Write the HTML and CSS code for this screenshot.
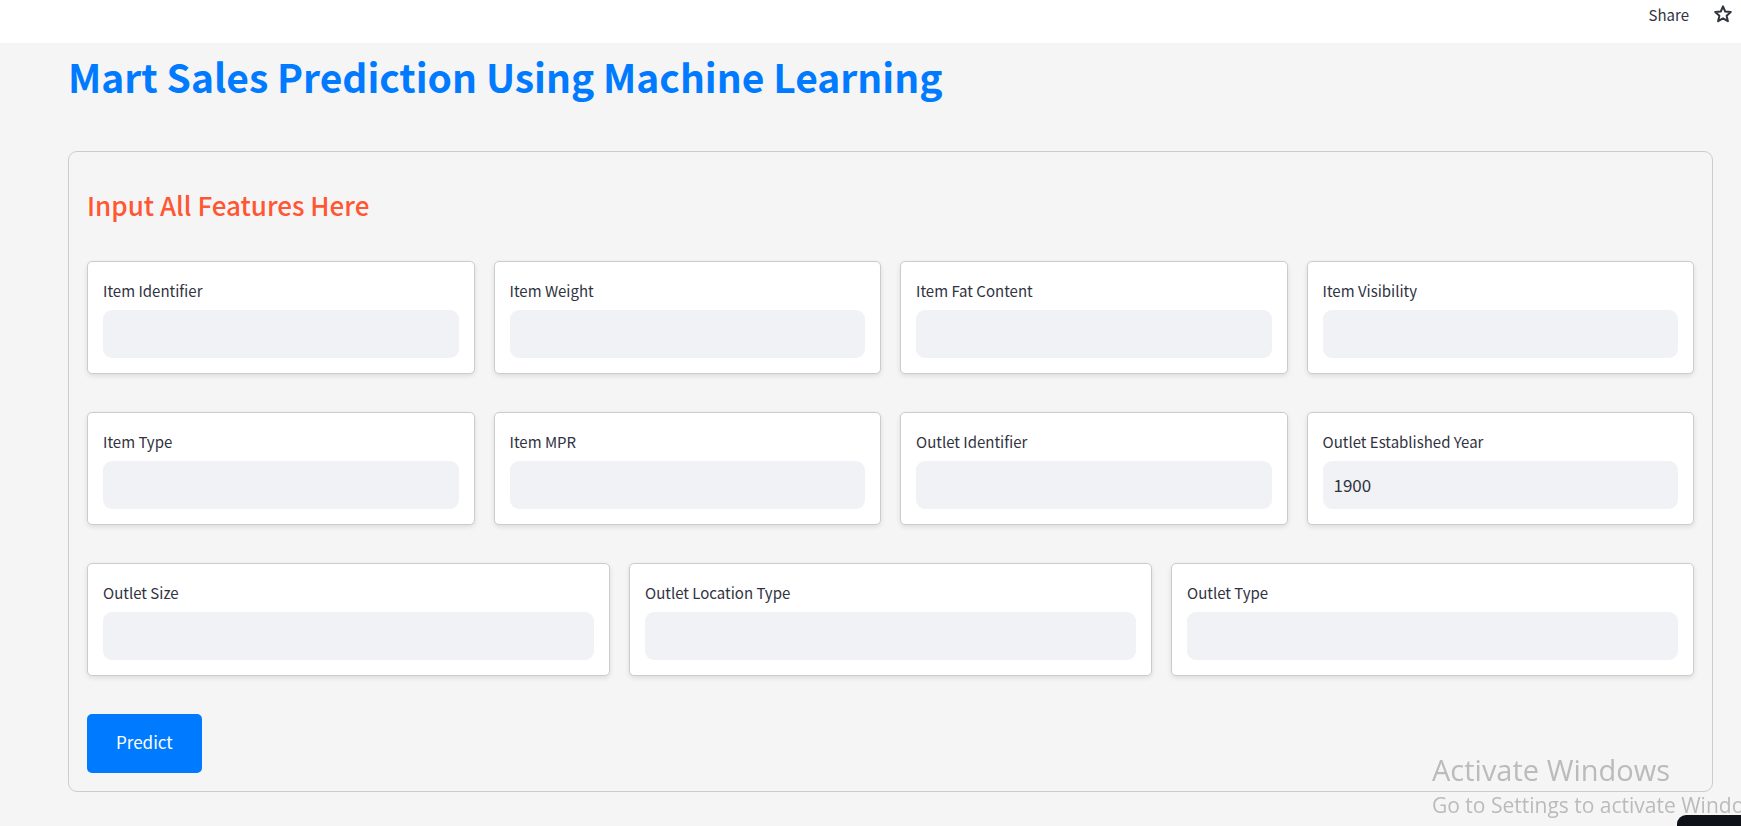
FILE: index.html
```html
<!DOCTYPE html>
<html lang="en">
<head>
<meta charset="utf-8">
<meta name="viewport" content="width=device-width, initial-scale=1">
<title>Mart Sales Prediction</title>
<link rel="stylesheet" href="styles.css">
</head>
<body>
<header class="toolbar">
  <button class="toolbar-button" type="button">Share</button>
  <button class="toolbar-button" type="button" aria-label="Favorite">
    <svg class="star" viewBox="0 0 20 20" aria-hidden="true"><path d="M10 2.3 12.2 7.5 17.8 8 13.6 11.7 14.9 17.2 10 14.3 5.1 17.2 6.4 11.7 2.2 8 7.8 7.5Z"/></svg>
  </button>
</header>
<main class="page">
  <h1 class="title">Mart Sales Prediction Using Machine Learning</h1>
  <form class="form">
    <h2 class="subtitle">Input All Features Here</h2>
    <div class="row">
      <div class="card"><label class="label" for="item-id">Item Identifier</label><input class="input" id="item-id" type="text"></div>
      <div class="card"><label class="label" for="item-weight">Item Weight</label><input class="input" id="item-weight" type="text"></div>
      <div class="card"><label class="label" for="item-fat">Item Fat Content</label><input class="input" id="item-fat" type="text"></div>
      <div class="card"><label class="label" for="item-vis">Item Visibility</label><input class="input" id="item-vis" type="text"></div>
    </div>
    <div class="row">
      <div class="card"><label class="label" for="item-type">Item Type</label><input class="input" id="item-type" type="text"></div>
      <div class="card"><label class="label" for="item-mpr">Item MPR</label><input class="input" id="item-mpr" type="text"></div>
      <div class="card"><label class="label" for="outlet-id">Outlet Identifier</label><input class="input" id="outlet-id" type="text"></div>
      <div class="card"><label class="label" for="outlet-year">Outlet Established Year</label><input class="input" id="outlet-year" type="text" inputmode="numeric" value="1900"></div>
    </div>
    <div class="row">
      <div class="card"><label class="label" for="outlet-size">Outlet Size</label><input class="input" id="outlet-size" type="text"></div>
      <div class="card"><label class="label" for="outlet-loc">Outlet Location Type</label><input class="input" id="outlet-loc" type="text"></div>
      <div class="card"><label class="label" for="outlet-type">Outlet Type</label><input class="input" id="outlet-type" type="text"></div>
    </div>
    <button class="predict" type="submit">Predict</button>
  </form>
</main>
<div class="manage"></div>
<aside class="watermark">
  <p class="watermark-title">Activate Windows</p>
  <p class="watermark-text">Go to Settings to activate Windows.</p>
</aside>
</body>
</html>
```

FILE: styles.css
```css
* {
  box-sizing: border-box;
}

body {
  margin: 0;
  min-height: 100vh;
  overflow: hidden;
  background: #f5f5f5;
  color: #31333f;
  font-family: "Noto Sans CJK SC", "Noto Sans", sans-serif;
}

button,
input {
  color: inherit;
  font-family: inherit;
}

.toolbar {
  display: flex;
  justify-content: flex-end;
  gap: 24px;
  height: 43px;
  padding: 0 8px 0 0;
  background: #fff;
}

.toolbar-button {
  display: flex;
  align-items: center;
  height: 28px;
  padding: 0;
  border: 0;
  background: none;
  font-size: 15px;
}

.star {
  width: 20px;
  height: 20px;
  fill: none;
  stroke: #31333f;
  stroke-width: 2;
  stroke-linejoin: round;
}

.page {
  padding: 6px 28px 34px 68px;
}

.title {
  margin: 0 0 48px;
  color: #007bff;
  font-size: 39px;
  line-height: 54px;
  font-weight: 700;
}

.form {
  padding: 18px;
  border: 1px solid #ccc;
  border-radius: 9px;
}

.subtitle {
  margin: 16px 0 38px;
  color: #ff5733;
  font-size: 26px;
  line-height: 37px;
  font-weight: 500;
}

.row {
  display: flex;
  gap: 19px;
  margin-bottom: 38px;
}

.card {
  flex: 1 1 0;
  min-width: 0;
  padding: 15px;
  border: 1px solid #ccc;
  border-radius: 5px;
  background: #fff;
  box-shadow: 0 2px 5px rgba(0, 0, 0, 0.1);
}

.label {
  display: block;
  margin-bottom: 6px;
  font-size: 15px;
  line-height: 27px;
}

.input {
  display: block;
  width: 100%;
  height: 48px;
  padding: 0 11px 2px;
  border: 0;
  border-radius: 9px;
  background: #f0f2f6;
  font-size: 17px;
}

.predict {
  display: block;
  height: 59px;
  padding: 0 29px 4px;
  border: 0;
  border-radius: 5px;
  background: #007bff;
  color: #fff;
  font-size: 17px;
}

/* Overlays pinned to the bottom right corner of the window */
.manage {
  position: fixed;
  right: 0;
  bottom: 0;
  width: 64px;
  height: 11px;
  border-radius: 9px 0 0 0;
  background: #0e1117;
}

.watermark {
  position: fixed;
  right: 0;
  bottom: 6px;
  width: 309px;
  overflow: hidden;
  color: #bbb;
  font-family: "Open Sans", "Noto Sans", sans-serif;
  white-space: nowrap;
  pointer-events: none;
}

.watermark-title,
.watermark-text {
  margin: 0;
}

.watermark-title {
  font-size: 29px;
  line-height: 40px;
}

.watermark-text {
  font-size: 21px;
  line-height: 30px;
}
```
